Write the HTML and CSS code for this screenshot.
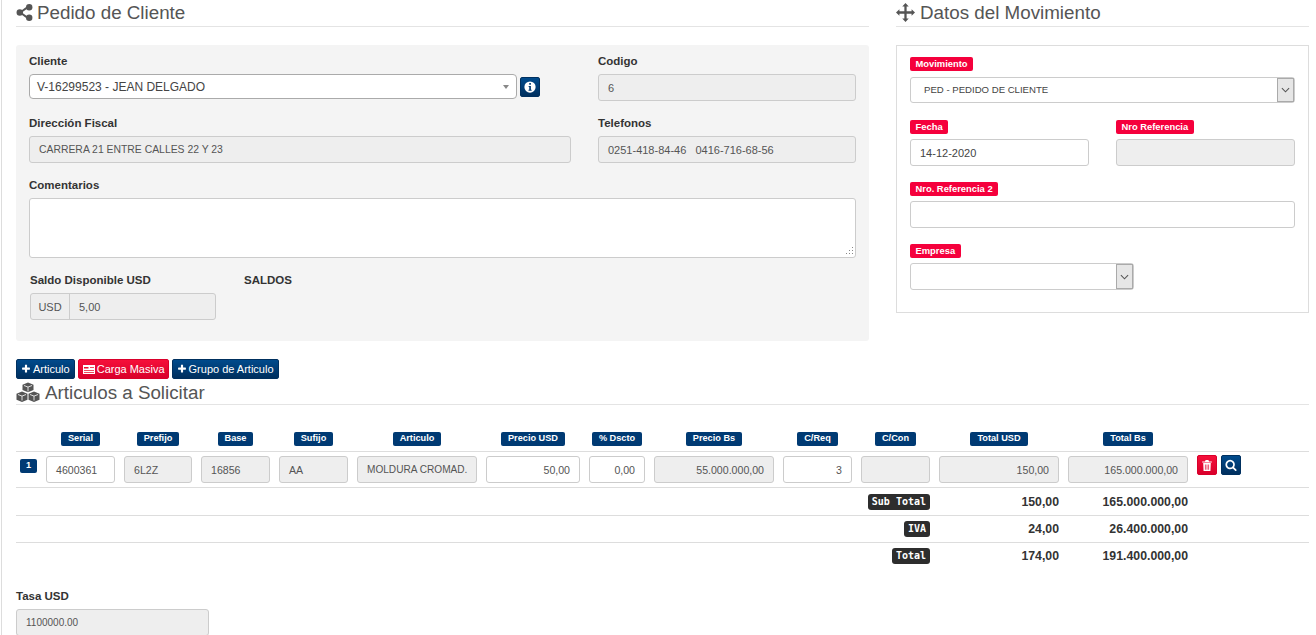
FILE: index.html
```html
<!DOCTYPE html>
<html lang="es">
<head>
<meta charset="utf-8">
<title>Pedido de Cliente</title>
<link rel="stylesheet" href="styles.css">
</head>
<body>
<div class="page">
  <div class="top">
    <section class="left">
      <h2 class="title"><svg class="ti" viewBox="0 0 18 18"><path d="M13.5 2.5 4.5 9l9 6.5" fill="none" stroke="#555" stroke-width="2"/><circle cx="14" cy="3.5" r="3.4" fill="#555"/><circle cx="4" cy="9" r="3.4" fill="#555"/><circle cx="14" cy="14.5" r="3.4" fill="#555"/></svg>Pedido de Cliente</h2>
      <div class="panel">
        <div class="pgrid">
          <div class="f">
            <label>Cliente</label>
            <div class="crow">
              <div class="combo"><span>V-16299523 - JEAN DELGADO</span><i class="caret"></i></div>
              <button class="btn blue info"><svg viewBox="0 0 16 16" width="12" height="12"><circle cx="8" cy="8" r="7.5" fill="#fff"/><path d="M6.2 6.5h3v5h1v1.4H6v-1.4h1v-3.6h-.8zM7 2.8h2.2v2.3H7z" fill="#003a73"/></svg></button>
            </div>
          </div>
          <div class="f">
            <label>Codigo</label>
            <div class="inp ro">6</div>
          </div>
          <div class="f r2">
            <label>Dirección Fiscal</label>
            <div class="inp ro narrow">CARRERA 21 ENTRE CALLES 22 Y 23</div>
          </div>
          <div class="f r2">
            <label>Telefonos</label>
            <div class="inp ro">0251-418-84-46 &nbsp; 0416-716-68-56</div>
          </div>
        </div>
        <div class="f r3">
          <label>Comentarios</label>
          <div class="area"><svg class="grip" viewBox="0 0 10 10" width="10" height="10"><path d="M9 1v1H8V1zM9 4v1H8V4zM6 4v1H5V4zM9 7v1H8V7zM6 7v1H5V7zM3 7v1H2V7z" fill="#888"/></svg></div>
        </div>
        <div class="saldos">
          <div class="saldo">
            <label>Saldo Disponible USD</label>
            <div class="group"><span class="addon">USD</span><span class="gval">5,00</span></div>
          </div>
          <label class="sl">SALDOS</label>
        </div>
      </div>
    </section>
    <section class="right">
      <h2 class="title"><svg class="ti mv" viewBox="0 0 20 20"><path d="M10 0l3.4 3.6h-2.2v5.2h5.2V6.600L20 10l-3.600 3.400v-2.200h-5.200v5.200h2.200L10 20l-3.400-3.600h2.200v-5.200H3.600v2.200L0 10l3.600-3.400v2.200h5.200V3.600H6.600z" fill="#555"/></svg>Datos del Movimiento</h2>
      <div class="box">
        <div class="bf first">
          <span class="tag">Movimiento</span>
          <div class="sel"><span class="stext">PED - PEDIDO DE CLIENTE</span><span class="sbtn"><svg viewBox="0 0 10 6" width="9" height="6"><path d="M1 1l4 4 4-4" fill="none" stroke="#555" stroke-width="1.200"/></svg></span></div>
        </div>
        <div class="two">
          <div class="bf">
            <span class="tag">Fecha</span>
            <div class="inp plain">14-12-2020</div>
          </div>
          <div class="bf">
            <span class="tag">Nro Referencia</span>
            <div class="inp ro"></div>
          </div>
        </div>
        <div class="bf">
          <span class="tag">Nro. Referencia 2</span>
          <div class="inp plain tall"></div>
        </div>
        <div class="bf last">
          <span class="tag">Empresa</span>
          <div class="sel emp tall"><span class="stext"></span><span class="sbtn"><svg viewBox="0 0 10 6" width="9" height="6"><path d="M1 1l4 4 4-4" fill="none" stroke="#555" stroke-width="1.200"/></svg></span></div>
        </div>
      </div>
    </section>
  </div>

  <div class="actions">
    <button class="btn blue"><svg class="bi" viewBox="0 0 1792 1792"><path d="M1600 736v192q0 40-28 68t-68 28h-416v416q0 40-28 68t-68 28h-192q-40 0-68-28t-28-68v-416h-416q-40 0-68-28t-28-68v-192q0-40 28-68t68-28h416v-416q0-40 28-68t68-28h192q40 0 68 28t28 68v416h416q40 0 68 28t28 68z" fill="#fff"/></svg>Articulo</button>
    <button class="btn red"><svg class="bi np" viewBox="0 0 12 9"><path d="M0 0h12v9H0z" fill="#fff"/><path d="M1 2h4.500v1.500H1zM7 2h4v.8H7zM1 5h10v.8H1zM1 7h10v.8H1z" fill="#e8112d"/></svg>Carga Masiva</button>
    <button class="btn blue"><svg class="bi" viewBox="0 0 1792 1792"><path d="M1600 736v192q0 40-28 68t-68 28h-416v416q0 40-28 68t-68 28h-192q-40 0-68-28t-28-68v-416h-416q-40 0-68-28t-28-68v-192q0-40 28-68t68-28h416v-416q0-40 28-68t68-28h192q40 0 68 28t28 68v416h416q40 0 68 28t28 68z" fill="#fff"/></svg>Grupo de Articulo</button>
  </div>
  <h2 class="title t2"><svg class="ti cubes" viewBox="0 0 24 20"><path d="M12 0l5.500 2.200v5.400L12 9.800 6.500 7.600V2.200z" fill="#555"/><path d="M6 9l5.500 2.200v6L6 19.500.5 17.200v-6z" fill="#555"/><path d="M18 9l5.500 2.200v6L18 19.500l-5.500-2.300v-6z" fill="#555"/><path d="M8 3l4 1.600L16 3M12 4.600V9M2 12l4 1.600 4-1.600M6 13.600V18M14 12l4 1.600 4-1.600M18 13.600V18" fill="none" stroke="#fff" stroke-width=".8"/></svg>Articulos a Solicitar</h2>

  <table class="tbl">
    <colgroup>
      <col class="c0"><col class="c78"><col class="c77"><col class="c78"><col class="c78"><col class="c129"><col class="c103"><col class="c65"><col class="c129"><col class="c78"><col class="c78"><col class="c129"><col class="c129"><col>
    </colgroup>
    <thead>
      <tr>
        <th></th>
        <th><span class="hb">Serial</span></th>
        <th><span class="hb">Prefijo</span></th>
        <th><span class="hb">Base</span></th>
        <th><span class="hb">Sufijo</span></th>
        <th><span class="hb">Articulo</span></th>
        <th><span class="hb">Precio USD</span></th>
        <th><span class="hb">% Dscto</span></th>
        <th><span class="hb">Precio Bs</span></th>
        <th><span class="hb">C/Req</span></th>
        <th><span class="hb">C/Con</span></th>
        <th><span class="hb">Total USD</span></th>
        <th><span class="hb">Total Bs</span></th>
        <th></th>
      </tr>
    </thead>
    <tbody>
      <tr class="item">
        <td class="num"><span class="hb n">1</span></td>
        <td><div class="ci">4600361</div></td>
        <td><div class="ci ro">6L2Z</div></td>
        <td><div class="ci ro">16856</div></td>
        <td><div class="ci ro">AA</div></td>
        <td><div class="ci ro clip">MOLDURA CROMAD.</div></td>
        <td><div class="ci end">50,00</div></td>
        <td><div class="ci end">0,00</div></td>
        <td><div class="ci ro end">55.000.000,00</div></td>
        <td><div class="ci end">3</div></td>
        <td><div class="ci ro"></div></td>
        <td><div class="ci ro end">150,00</div></td>
        <td><div class="ci ro end">165.000.000,00</div></td>
        <td class="acts">
          <button class="btn red sq"><svg viewBox="0 0 14 16" width="10" height="11"><path d="M5 0h4l1 2h4v1.500H0V2h4zM1.500 4.500h11L12 16H2zM4 6.500v7.500h1V6.500zM6.500 6.500v7.500h1V6.500zM9 6.500v7.500h1V6.500z" fill="#fff" fill-rule="evenodd"/></svg></button>
          <button class="btn blue sq"><svg viewBox="0 0 1792 1792" width="12" height="12"><path d="M1216 832q0-185-131.500-316.500t-316.500-131.500-316.500 131.500-131.500 316.500 131.500 316.500 316.500 131.500 316.500-131.500 131.500-316.500zm512 832q0 52-38 90t-90 38q-54 0-90-38l-343-342q-179 124-399 124-143 0-273.500-55.500t-225-150-150-225-55.500-273.500 55.500-273.500 150-225 225-150 273.500-55.500 273.500 55.500 225 150 150 225 55.500 273.500q0 220-124 399l343 343q37 37 37 90z" fill="#fff"/></svg></button>
        </td>
      </tr>
      <tr class="sum">
        <td colspan="11" class="sl-cell"><code class="k">Sub Total</code></td>
        <td class="v">150,00</td><td class="v">165.000.000,00</td><td></td>
      </tr>
      <tr class="sum iva">
        <td colspan="11" class="sl-cell"><code class="k">IVA</code></td>
        <td class="v">24,00</td><td class="v">26.400.000,00</td><td></td>
      </tr>
      <tr class="sum nob">
        <td colspan="11" class="sl-cell"><code class="k">Total</code></td>
        <td class="v">174,00</td><td class="v">191.400.000,00</td><td></td>
      </tr>
    </tbody>
  </table>

  <div class="tasa">
    <label>Tasa USD</label>
    <div class="ci ro tasav">1100000.00</div>
  </div>
</div>
</body>
</html>
```
FILE: styles.css
```css
* { box-sizing: border-box; }
html, body { margin: 0; padding: 0; height: 635px; overflow: hidden; background: #fff; }
body { font-family: "Liberation Sans", Arial, sans-serif; font-size: 12px; color: #333; }
.page { margin-left: 1px; border-left: 1px solid #ddd; padding: 0 7px 0 14px; height: 635px; }

.top { display: flex; gap: 27px; align-items: flex-start; }
.left { width: 853px; }
.right { width: 413px; }

.title { margin: 0; height: 27px; border-bottom: 1px solid #e4e4e4; font-size: 18.800px; font-weight: 400; line-height: 25px; color: #555; display: flex; align-items: center; padding-bottom: 2px; }
.ti { width: 17px; height: 17px; margin-right: 4px; flex: none; }
.ti.mv { width: 19px; height: 19px; margin-right: 5px; }
.ti.cubes { width: 24px; height: 21px; margin-right: 5px; }

.panel { margin-top: 18px; height: 296px; background: #f4f4f4; border-radius: 3px; padding: 9px 13px 0; }
.pgrid { display: grid; grid-template-columns: 542px 258px; column-gap: 27px; }
label { display: block; font-weight: 700; font-size: 11.500px; line-height: 14px; color: #333; }
.f { display: flex; flex-direction: column; gap: 6px; min-width: 0; }
.f.r2 { margin-top: 15px; }
.crow { display: flex; align-items: center; gap: 3px; }
.combo { width: 488px; height: 25px; background: #fff; border: 1px solid #aaa; border-radius: 4px; padding: 0 7px; display: flex; align-items: center; justify-content: space-between; font-size: 12px; color: #444; }
.caret { width: 0; height: 0; border-left: 3.500px solid transparent; border-right: 3.500px solid transparent; border-top: 4px solid #888; }

.inp { height: 27px; border: 1px solid #ccc; border-radius: 3px; background: #fff; padding: 0 9px; display: flex; align-items: center; font-size: 11px; color: #555; }
.inp.ro, .ci.ro { background: #eee; }
.inp.narrow { font-size: 10.400px; }
.inp.plain { color: #444; }

.f.r3 { margin-top: 15px; }
.area { height: 60px; background: #fff; border: 1px solid #ccc; border-radius: 3px; display: flex; align-items: flex-end; justify-content: flex-end; }
.grip { margin: 0 1px 1px 0; }

.saldos { display: flex; margin-top: 15px; padding-left: 1px; }
.saldo { width: 186px; display: flex; flex-direction: column; gap: 6px; }
.sl { margin-left: 28px; }
.group { display: flex; height: 27px; border: 1px solid #ccc; border-radius: 3px; background: #eee; font-size: 11px; color: #555; }
.addon { width: 39px; border-right: 1px solid #ccc; display: flex; align-items: center; justify-content: center; }
.gval { display: flex; align-items: center; padding-left: 9px; }

.box { margin-top: 18px; height: 268px; border: 1px solid #ddd; padding: 11px 13px 0; display: flex; flex-direction: column; }
.bf { display: flex; flex-direction: column; align-items: stretch; gap: 5px; }
.bf.first { gap: 6px; }
.tag { align-self: flex-start; height: 14px; background: #f5003c; color: #fff; border-radius: 2px; font-size: 9.400px; font-weight: 700; line-height: 13px; padding: 0 5.500px; }
.sel { height: 26px; background: #fff; border: 1px solid #ccc; border-radius: 3px; display: flex; align-items: stretch; font-size: 9.600px; color: #444; }
.stext { flex: 1; display: flex; align-items: center; padding: 0 0 1px 13px; }
.sbtn { width: 17px; background: #e6e6e6; border: 1px solid #aaa; display: flex; align-items: center; justify-content: center; }
.two { display: grid; grid-template-columns: 179px 179px; column-gap: 27px; margin-top: 17px; }
.two + .bf { margin-top: 16px; }
.bf.last { margin-top: 16px; }
.sel.emp { width: 224px; height: 27px; }

.actions { display: flex; gap: 3px; margin-top: 18px; }
.btn { border: 1px solid #00305f; border-radius: 2px; color: #fff; font-family: inherit; font-size: 11px; height: 20px; padding: 0 4px; display: inline-flex; align-items: center; white-space: nowrap; }
.btn.blue { background: linear-gradient(#004a8c, #002f5e); }
.btn.red { background: linear-gradient(#f5103a, #d9002b); border-color: #d9002b; }
.actions .red { padding-right: 3px; }
.bi { width: 10px; height: 10px; margin-right: 2px; }
.bi.np { width: 12px; height: 9px; margin-right: 2px; }
.info { width: 20px; height: 20px; padding: 0; justify-content: center; }
.sq { width: 20px; height: 20px; padding: 0; justify-content: center; flex: none; }

.title.t2 { height: 26px; padding: 1px 0 0; }

.tbl { width: 1293px; border-collapse: collapse; table-layout: fixed; margin-top: 27px; }
.c0 { width: 25.5px; } .c78 { width: 78px; } .c77 { width: 77px; } .c129 { width: 129px; } .c103 { width: 103px; } .c65 { width: 65px; }
.tbl th { padding: 0 0 5px; text-align: center; font-weight: 700; border-bottom: 1px solid #ddd; height: 19px; line-height: 14px; }
.hb { display: inline-block; height: 14px; background: #003a73; color: #fff; border-radius: 2px; font-size: 9.200px; font-weight: 700; line-height: 12px; padding: 0 7px; vertical-align: top; }
.hb.n { padding: 0 5.500px; }
.tbl td { padding: 0 4.500px; border-bottom: 1px solid #ddd; }
.item td { height: 36px; padding-top: 4px; padding-bottom: 4px; }
.num { text-align: right; vertical-align: top; }
.tbl td.num { padding: 7px 5px 0 4px; }
.ci { height: 27px; border: 1px solid #ccc; border-radius: 3px; background: #fff; padding: 0 9px; display: flex; align-items: center; font-size: 10.600px; color: #555; white-space: nowrap; overflow: hidden; }
.ci.end { justify-content: flex-end; }
.ci.clip { font-size: 10.100px; }
.tbl td.acts { vertical-align: top; padding: 3px 0 0 4.500px; }
.acts { white-space: nowrap; }
.acts .sq { margin-right: 1px; vertical-align: top; }

.sum td { height: 28px; }
.sum.iva td { height: 27px; }
.sum.nob td { height: 27px; border-bottom: 0; }
.sl-cell { text-align: right; }
.k { display: inline-block; background: #2d2d2d; color: #fff; border-radius: 3px; font-family: "DejaVu Sans Mono", "Liberation Mono", monospace; font-weight: 700; font-size: 10px; line-height: 16px; height: 16px; padding: 0 4px; vertical-align: middle; }
.v { text-align: right; font-weight: 700; font-size: 12.300px; color: #333; }

.tasa { margin-top: 19px; display: flex; flex-direction: column; gap: 6px; }
.tasav { width: 193px; font-size: 10px; }
```
